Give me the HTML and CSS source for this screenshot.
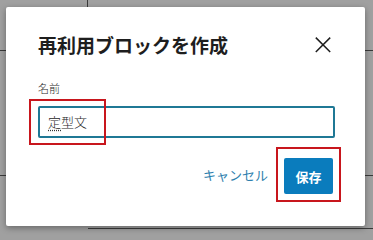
FILE: index.html
```html
<!DOCTYPE html>
<html lang="ja">
<head>
<meta charset="utf-8">
<title>再利用ブロックを作成</title>
<link rel="stylesheet" href="styles.css">
</head>
<body>
<div class="dialog" role="dialog">
  <div class="header">
    <h1 class="title">再利用ブロックを作成</h1>
    <button class="close" aria-label="閉じる">
      <svg width="24" height="24" viewBox="0 0 24 24"><path d="M4.8 4.6 L19.2 19 M19.2 4.6 L4.8 19" stroke="#1e1e1e" stroke-width="1.5" fill="none"/></svg>
    </button>
  </div>
  <label class="label" for="name">名前</label>
  <div class="field">
    <div class="input" id="name"><span class="ime">定</span>型文</div>
    <div class="mark mark-input"></div>
  </div>
  <div class="footer">
    <button class="cancel">キャンセル</button>
    <div class="save-wrap">
      <button class="save">保存</button>
      <div class="mark mark-save"></div>
    </div>
  </div>
</div>
</body>
</html>
```

FILE: styles.css
```css
html, body {
  margin: 0;
  height: 100%;
}
body {
  background-color: #a0a0a0;
  background-image:
    linear-gradient(#3a3a3a, #3a3a3a),
    linear-gradient(#3a3a3a, #3a3a3a),
    linear-gradient(#3a3a3a, #3a3a3a),
    linear-gradient(#3a3a3a, #3a3a3a);
  background-repeat: no-repeat;
  background-size: 1px 8px, 100% 1px, 100% 1px, 100% 1px;
  background-position: 87px 0, 0 50px, 0 175px, 88px 228px;
  padding: 7px 0 0 6px;
  box-sizing: border-box;
  font-family: "Noto Sans CJK JP", "Noto Sans", sans-serif;
  color: #1e1e1e;
}
.dialog {
  width: 359px;
  height: 219px;
  box-sizing: border-box;
  background: #fff;
  border-radius: 2px;
  box-shadow: 0 2px 6px rgba(0,0,0,0.35);
  padding: 26px 30px 0 32px;
  display: flex;
  flex-direction: column;
}
.header {
  display: flex;
  align-items: center;
  justify-content: space-between;
  height: 24px;
}
.title {
  margin: 0;
  font-size: 19px;
  line-height: 24px;
  font-weight: 700;
}
.close {
  width: 24px;
  height: 24px;
  padding: 0;
  border: 0;
  background: none;
  display: flex;
}
.label {
  margin-top: 24px;
  font-size: 11px;
  line-height: 14px;
  font-weight: 300;
  color: #1e1e1e;
}
.field {
  position: relative;
  margin-top: 11px;
}
.input {
  height: 32px;
  box-sizing: border-box;
  border: 2px solid #1f7895;
  border-radius: 2px;
  padding: 0 8px;
  font-size: 13px;
  line-height: 28px;
  font-weight: 300;
  color: #1e1e1e;
}
.ime {
  text-decoration: underline dotted #333;
  text-underline-offset: 3px;
}
.mark {
  position: absolute;
  border: 2px solid #c8161d;
  box-sizing: border-box;
  pointer-events: none;
}
.mark-input {
  left: -9px;
  top: -7px;
  width: 77px;
  height: 46px;
}
.footer {
  display: flex;
  justify-content: flex-end;
  align-items: center;
  margin-top: 20px;
  gap: 10px;
  padding-right: 2px;
}
.cancel {
  border: 0;
  background: none;
  font-family: inherit;
  font-size: 13px;
  line-height: 20px;
  font-weight: 400;
  color: #2f7fae;
  padding: 0 6px 0 0;
  margin-top: -2px;
}
.save-wrap {
  position: relative;
}
.save {
  display: block;
  width: 49px;
  height: 36px;
  border: 0;
  border-radius: 2px;
  background: #0a7cbd;
  color: #fff;
  font-family: inherit;
  font-size: 13px;
  font-weight: 700;
  padding: 0;
}
.mark-save {
  left: -8px;
  top: -11px;
  width: 65px;
  height: 55px;
}
```
